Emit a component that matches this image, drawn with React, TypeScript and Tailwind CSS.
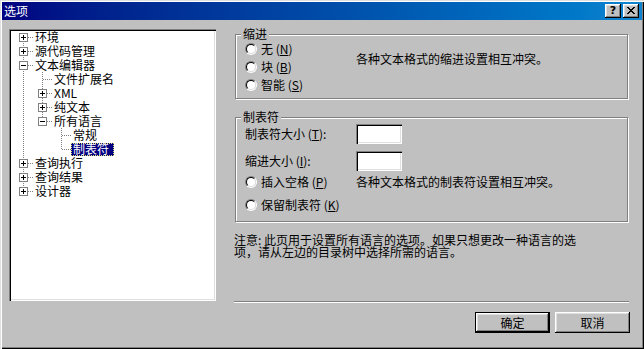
import React from "react";

const raised =
  "shadow-[inset_-1px_-1px_0_#000,inset_1px_1px_0_#fff,inset_-2px_-2px_0_#808080,inset_2px_2px_0_#dfdfdf]";
const sunken =
  "shadow-[inset_1px_1px_0_#808080,inset_2px_2px_0_#000,inset_-1px_-1px_0_#fff,inset_-2px_-2px_0_#dfdfdf]";

type Row = { label: string; level: number; kind: "plus" | "minus" | "leaf"; selected?: boolean };

const rows: Row[] = [
  { label: "环境", level: 0, kind: "plus" },
  { label: "源代码管理", level: 0, kind: "plus" },
  { label: "文本编辑器", level: 0, kind: "minus" },
  { label: "文件扩展名", level: 1, kind: "leaf" },
  { label: "XML", level: 1, kind: "plus" },
  { label: "纯文本", level: 1, kind: "plus" },
  { label: "所有语言", level: 1, kind: "minus" },
  { label: "常规", level: 2, kind: "leaf" },
  { label: "制表符", level: 2, kind: "leaf", selected: true },
  { label: "查询执行", level: 0, kind: "plus" },
  { label: "查询结果", level: 0, kind: "plus" },
  { label: "设计器", level: 0, kind: "plus" },
];

const CX = [14, 33, 52];
const TX = [26, 45, 64];
const cy = (i: number) => 8 + 14 * i;
const padClass = ["pl-[26px]", "pl-[45px]", "pl-[64px]"];

function TreeLines() {
  const dot = { stroke: "#808080", strokeDasharray: "1 1", shapeRendering: "crispEdges" as const };
  return (
    <svg className="absolute left-0 top-0 pointer-events-none" width={207} height={272}>
      {/* vertical sibling lines */}
      <line x1={CX[0] + 0.5} x2={CX[0] + 0.5} y1={cy(0)} y2={cy(11) + 1} {...dot} />
      <line x1={CX[1] + 0.5} x2={CX[1] + 0.5} y1={cy(3) - 7} y2={cy(6) + 1} {...dot} />
      <line x1={CX[2] + 0.5} x2={CX[2] + 0.5} y1={cy(7) - 7} y2={cy(8) + 1} {...dot} />
      {rows.map((r, i) => {
        const cx = CX[r.level];
        const y = cy(i) + 0.5;
        return (
          <line key={"h" + i} x1={cx + 1} x2={TX[r.level] - 2} y1={y} y2={y} {...dot} />
        );
      })}
      {rows.map((r, i) => {
        if (r.kind === "leaf") return null;
        const cx = CX[r.level];
        const c = cy(i);
        return (
          <g key={"b" + i} shapeRendering="crispEdges">
            <rect x={cx - 4 + 0.5} y={c - 4 + 0.5} width={8} height={8} fill="#fff" stroke="#808080" />
            <line x1={cx - 2} x2={cx + 3} y1={c + 0.5} y2={c + 0.5} stroke="#000" />
            {r.kind === "plus" && (
              <line x1={cx + 0.5} x2={cx + 0.5} y1={c - 2} y2={c + 3} stroke="#000" />
            )}
          </g>
        );
      })}
    </svg>
  );
}

function Tree() {
  return (
    <div className={`relative mt-[9px] w-[207px] h-[272px] bg-white ${sunken}`}>
      <TreeLines />
      <div className="relative pt-[1px]">
        {rows.map((r, i) => (
          <div key={i} className={`h-[14px] flex items-center ${padClass[r.level]}`}>
            {r.selected ? (
              <span className="-ml-[2px] h-[13px] flex items-center pl-[1px] pr-[4px] bg-[#000080] text-white border border-dotted border-[#e0e070] leading-[12px]">
                {r.label}
              </span>
            ) : (
              <span className="leading-[14px] whitespace-nowrap">{r.label}</span>
            )}
          </div>
        ))}
      </div>
    </div>
  );
}

function Radio() {
  return (
    <span className="w-[12px] h-[12px] rounded-full border border-t-[#808080] border-l-[#808080] border-b-white border-r-white flex items-center justify-center shrink-0">
      <span className="w-[10px] h-[10px] rounded-full border border-t-black border-l-black border-b-[#dfdfdf] border-r-[#dfdfdf] bg-white" />
    </span>
  );
}

function RadioLabel({ text, k }: { text: string; k: string }) {
  return (
    <div className="flex items-center gap-[4px] h-[18px]">
      <Radio />
      <span className="leading-[14px] whitespace-nowrap">
        {text} (<u>{k}</u>)
      </span>
    </div>
  );
}

function Field() {
  return <div className={`w-[46px] h-[20px] bg-white ${sunken}`} />;
}

function Group({ title, children, className }: { title: string; children: React.ReactNode; className?: string }) {
  return (
    <fieldset
      className={`ml-[1px] w-[393px] border border-[#808080] shadow-[inset_1px_1px_0_#fff,1px_1px_0_#fff] ${className ?? ""}`}
    >
      <legend className="ml-[5px] px-[2px] leading-[14px] bg-[#c0c0c0]">{title}</legend>
      {children}
    </fieldset>
  );
}

function Btn({ label, def }: { label: string; def?: boolean }) {
  return (
    <div className={`w-[75px] h-[21px] ${def ? "border border-black" : ""} bg-[#c0c0c0]`}>
      <div className={`w-full h-full flex items-center justify-center ${raised}`}>
        <span className="leading-[14px]">{label}</span>
      </div>
    </div>
  );
}

export default function App() {
  return (
    <div
      className={`w-[644px] h-[349px] bg-[#c0c0c0] p-[2px] text-[12px] text-black font-['Noto_Sans_CJK_SC','Noto_Sans_CJK_JP',sans-serif] shadow-[inset_1px_1px_0_#dfdfdf,inset_2px_2px_0_#fff,inset_-1px_-1px_0_#000,inset_-2px_-2px_0_#808080] overflow-hidden`}
    >
      {/* Title bar */}
      <div className="h-[18px] flex items-center justify-between bg-gradient-to-r from-[#000080] to-[#1084d0] pl-[2px] pr-[3px]">
        <span className="text-white leading-[14px]">选项</span>
        <div className="flex items-center gap-[2px]">
          <div className={`w-[16px] h-[14px] bg-[#c0c0c0] flex items-center justify-center ${raised}`}>
            <span className="font-['DejaVu_Sans',sans-serif] font-bold text-[11px] leading-[11px] -mt-[1px]">?</span>
          </div>
          <div className={`w-[16px] h-[14px] bg-[#c0c0c0] flex items-center justify-center ${raised}`}>
            <svg width="8" height="7" shapeRendering="crispEdges" className="-mt-[1px]">
              <path
                d="M0 0h2v1H0zM6 0h2v1H6zM1 1h2v1H1zM5 1h2v1H5zM2 2h4v1H2zM3 3h2v1H3zM2 4h4v1H2zM1 5h2v1H1zM5 5h2v1H5zM0 6h2v1H0zM6 6h2v1H6z"
                fill="#000"
              />
            </svg>
          </div>
        </div>
      </div>

      {/* Body */}
      <div className="flex pl-[7px]">
        <Tree />
        <div className="ml-[18px] w-[396px] pt-[7px] flex flex-col">
          <Group title="缩进">
            <div className="flex pl-[9px] pb-[4px] -mt-[1px]">
              <div className="w-[111px] flex flex-col">
                <RadioLabel text="无" k="N" />
                <RadioLabel text="块" k="B" />
                <RadioLabel text="智能" k="S" />
              </div>
              <div className="mt-[12px] leading-[14px] whitespace-nowrap">各种文本格式的缩进设置相互冲突。</div>
            </div>
          </Group>

          <Group title="制表符" className="mt-[11px]">
            <div className="flex flex-col pl-[9px] pb-[7px]">
              <div className="flex items-center h-[20px]">
                <span className="w-[111px] leading-[14px] whitespace-nowrap">
                  制表符大小 (<u>T</u>):
                </span>
                <Field />
              </div>
              <div className="flex items-center h-[20px] mt-[7px]">
                <span className="w-[111px] leading-[14px] whitespace-nowrap">
                  缩进大小 (<u>I</u>):
                </span>
                <Field />
              </div>
              <div className="flex items-center mt-[2px]">
                <div className="w-[111px]">
                  <RadioLabel text="插入空格" k="P" />
                </div>
                <span className="leading-[14px] whitespace-nowrap">各种文本格式的制表符设置相互冲突。</span>
              </div>
              <div className="mt-[5px]">
                <RadioLabel text="保留制表符" k="K" />
              </div>
            </div>
          </Group>

          <div className="mt-[12px] leading-[12px] whitespace-nowrap">
            注意: 此页用于设置所有语言的选项。如果只想更改一种语言的选
            <br />
            项，请从左边的目录树中选择所需的语言。
          </div>

          <div className="mt-[43px] w-[395px] h-[2px] border-t border-t-[#808080] border-b border-b-white" />

          <div className="mt-[9px] flex justify-end gap-[5px]">
            <Btn label="确定" def />
            <Btn label="取消" />
          </div>
        </div>
      </div>
    </div>
  );
}
